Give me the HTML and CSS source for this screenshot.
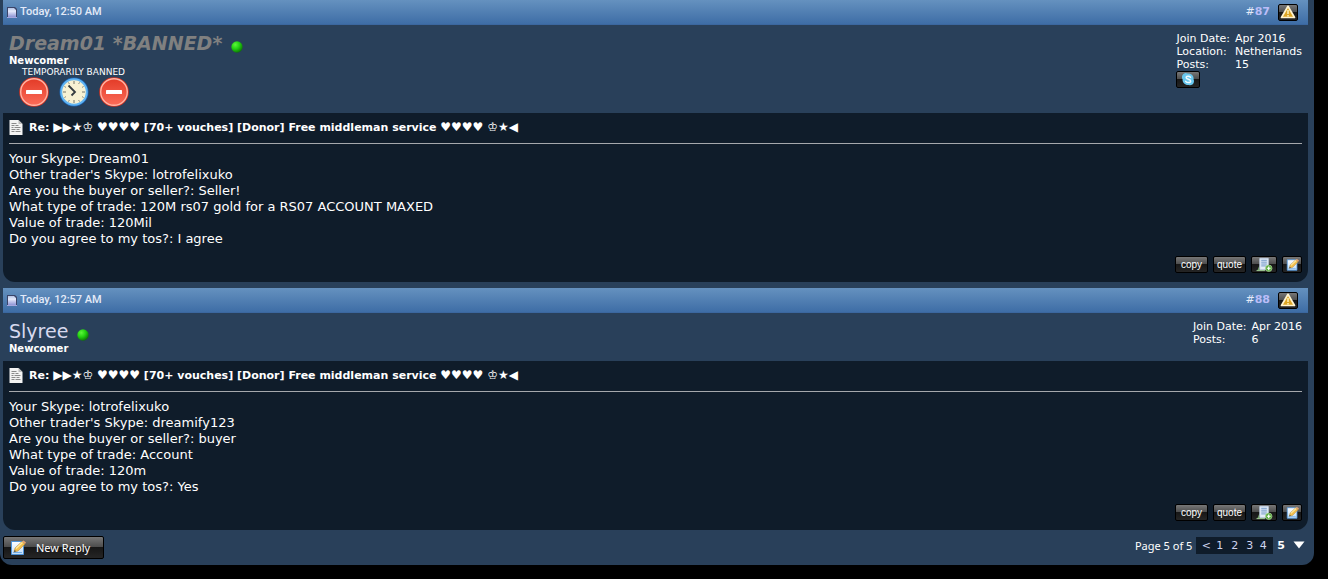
FILE: index.html
```html
<!DOCTYPE html>
<html lang="en">
<head>
<meta charset="utf-8">
<title>Free middleman service - Page 5</title>
<link rel="stylesheet" href="styles.css">
</head>
<body>
<svg class="defs" width="0" height="0" aria-hidden="true">
  <defs>
    <linearGradient id="g-note" x1="0" y1="0" x2="0" y2="1"><stop offset="0" stop-color="#b5c4e6"/><stop offset=".35" stop-color="#e6eafb"/><stop offset="1" stop-color="#8f95d6"/></linearGradient>
    <linearGradient id="g-red" x1="0" y1="0" x2="0" y2="1"><stop offset="0" stop-color="#e33b27"/><stop offset="1" stop-color="#fb6b58"/></linearGradient>
    <linearGradient id="g-sheet" x1="0" y1="0" x2="0" y2="1"><stop offset="0" stop-color="#fff"/><stop offset="1" stop-color="#bfdcf8"/></linearGradient>
    <radialGradient id="g-on" cx=".35" cy=".3" r=".75"><stop offset="0" stop-color="#5cf53a"/><stop offset=".5" stop-color="#22d010"/><stop offset="1" stop-color="#0c6c08"/></radialGradient>
    <symbol id="i-note" viewBox="0 0 10 11"><path d="M0 0h8l2 2v9H0z" fill="#3a4468"/><path d="M1 1h6l2 2v7H1z" fill="url(#g-note)"/><path d="M0 10.500h10" stroke="#a4a7dd"/></symbol>
    <symbol id="i-page" viewBox="0 0 13 15"><path d="M0 0h9l4 4v11H0z" fill="#f3f3f3"/><path d="M9 0v4h4z" fill="#bbb"/><path d="M2 3.500h5M2 5.500h3M6 5.500h3M2 7.500h2M5 7.500h6M2 9.500h4M7 9.500h3M2 11.500h3M6 11.500h5" stroke="#8a8a8a"/></symbol>
    <symbol id="i-online" viewBox="0 0 12 12"><circle cx="6" cy="6" r="5.700" fill="url(#g-on)"/></symbol>
    <symbol id="i-stop" viewBox="0 0 30 30"><circle cx="15" cy="15" r="14.800" fill="#d93220"/><circle cx="15" cy="15" r="13.300" fill="url(#g-red)" stroke="#ffb5a5" stroke-width="1.400"/><rect x="7" y="13" width="16" height="4" rx=".6" fill="#fff"/></symbol>
    <symbol id="i-clock" viewBox="0 0 30 30"><circle cx="15" cy="15" r="14.500" fill="#1c66b8"/><circle cx="15" cy="15" r="12.800" fill="#f7f1d3" stroke="#62b5f3" stroke-width="2"/><g stroke="#77776a"><path d="M15 4v3M15 23v3M4 15h3M23 15h3"/><path d="M9.500 5.500l.8 1.300M20.500 5.500l-.8 1.300M5.500 9.500l1.300.8M24.500 9.500l-1.300.8M5.500 20.500l1.300-.8M24.500 20.500l-1.300-.8M9.500 24.500l.8-1.300M20.500 24.500l-.8-1.300"/></g><path d="M9.500 8.500L16 15l-3.500 3.500" fill="none" stroke="#343b40" stroke-width="1.800"/></symbol>
    <symbol id="i-warn" viewBox="0 0 16 14"><path d="M8 1.300L14.500 12.500h-13z" fill="#dda524" stroke="#fff3cf" stroke-width="1.700" stroke-linejoin="round"/><path d="M8 5v4M8 10v1.500" stroke="#fff3bd" stroke-width="1.500"/></symbol>
    <symbol id="i-skype" viewBox="0 0 16 16"><path d="M4.500 1.200C6 .8 7 1.800 8 1.700c4 0 6.300 2.800 6 6.300 1.500 3.400-1.500 7-5 5.900C5 14.500 1.900 11.500 2.200 7.800.8 5.300 1.900 2 4.500 1.200z" fill="#69c8ef"/><path d="M10.700 5.500C9.300 4 6 4.100 6 5.900c0 2.300 4.800 1.500 4.800 3.900 0 2-4 1.900-5.300.2" fill="none" stroke="#eefaff" stroke-width="1.600" stroke-linecap="round"/></symbol>
    <symbol id="i-multi" viewBox="0 0 17 16"><path d="M1 14l2-5v5z" fill="#71a767"/><path d="M3.500 1.500h9v12h-9z" fill="#e3ecf7" stroke="#c4d3e8"/><path d="M5 3.500h6M5 5.500h6M5 7.500h6M5 9.500h5" stroke="#6d94c5"/><path d="M0 14.500h9" stroke="#a7d69c"/><circle cx="13" cy="12" r="3.500" fill="#57ab3b" stroke="#b7dca7" stroke-width=".7"/><path d="M11 12h4M13 10v4" stroke="#fff" stroke-width="1.300"/></symbol>
    <symbol id="i-edit" viewBox="0 0 16 16"><path d="M1.500 1.500h12v13h-12z" fill="url(#g-sheet)" stroke="#4d94da"/><path d="M3 12.500h9" stroke="#72aee8"/><path d="M4 12l1-4 7-6.500L15 4 8 11z" fill="#f2bf4c" stroke="#a9803a" stroke-width=".5"/><path d="M6 8.500l6.500-6" stroke="#ffe99e" stroke-width="1.400"/><path d="M4 12l.7-2 1.300 1.300z" fill="#3d4147"/><path d="M12 1.500L15 4l1-1.500L13.500.5z" fill="#e9a36c"/></symbol>
  </defs>
</svg>
<main class="thread">
  <article class="post">
    <header class="post-head">
      <span class="posted"><svg class="ico-note"><use href="#i-note"/></svg>Today, 12:50 AM</span>
      <span class="post-tools"><a class="number" href="#p87">#<b>87</b></a><button class="tool tool-warn" aria-label="Report post"><svg class="ico-warn"><use href="#i-warn"/></svg></button></span>
    </header>
    <section class="user">
      <div class="user-main">
        <div class="name-row"><a class="name banned" href="#dream01">Dream01 *BANNED*</a><svg class="ico-online"><use href="#i-online"/></svg></div>
        <div class="rank">Newcomer</div>
        <div class="ban">
          <div class="ban-text">TEMPORARILY BANNED</div>
          <div class="ban-icons"><svg><use href="#i-stop"/></svg><svg><use href="#i-clock"/></svg><svg><use href="#i-stop"/></svg></div>
        </div>
      </div>
      <div class="user-extra">
        <dl class="facts"><dt>Join Date:</dt><dd>Apr 2016</dd><dt>Location:</dt><dd>Netherlands</dd><dt>Posts:</dt><dd>15</dd></dl>
        <button class="tool tool-skype" aria-label="Skype"><svg class="ico-skype"><use href="#i-skype"/></svg></button>
      </div>
    </section>
    <section class="body">
      <h2 class="title"><svg class="ico-page"><use href="#i-page"/></svg><span>Re: <span class="sym">▶▶★♔</span> <span class="sym">♥♥♥♥</span> [70+ vouches] [Donor] Free middleman service <span class="sym">♥♥♥♥</span> <span class="sym">♔★◀</span></span></h2>
      <p class="message">Your Skype: Dream01<br>Other trader's Skype: lotrofelixuko<br>Are you the buyer or seller?: Seller!<br>What type of trade: 120M rs07 gold for a RS07 ACCOUNT MAXED<br>Value of trade: 120Mil<br>Do you agree to my tos?: I agree</p>
      <div class="actions"><button class="tool tool-text">copy</button><button class="tool tool-text">quote</button><button class="tool tool-multi" aria-label="Multi-quote"><svg class="ico-multi"><use href="#i-multi"/></svg></button><button class="tool tool-edit" aria-label="Quick reply"><svg class="ico-edit"><use href="#i-edit"/></svg></button></div>
    </section>
  </article>
  <article class="post">
    <header class="post-head">
      <span class="posted"><svg class="ico-note"><use href="#i-note"/></svg>Today, 12:57 AM</span>
      <span class="post-tools"><a class="number" href="#p88">#<b>88</b></a><button class="tool tool-warn" aria-label="Report post"><svg class="ico-warn"><use href="#i-warn"/></svg></button></span>
    </header>
    <section class="user">
      <div class="user-main">
        <div class="name-row"><a class="name" href="#slyree">Slyree</a><svg class="ico-online"><use href="#i-online"/></svg></div>
        <div class="rank">Newcomer</div>
      </div>
      <div class="user-extra">
        <dl class="facts"><dt>Join Date:</dt><dd>Apr 2016</dd><dt>Posts:</dt><dd>6</dd></dl>
      </div>
    </section>
    <section class="body">
      <h2 class="title"><svg class="ico-page"><use href="#i-page"/></svg><span>Re: <span class="sym">▶▶★♔</span> <span class="sym">♥♥♥♥</span> [70+ vouches] [Donor] Free middleman service <span class="sym">♥♥♥♥</span> <span class="sym">♔★◀</span></span></h2>
      <p class="message">Your Skype: lotrofelixuko<br>Other trader's Skype: dreamify123<br>Are you the buyer or seller?: buyer<br>What type of trade: Account<br>Value of trade: 120m<br>Do you agree to my tos?: Yes</p>
      <div class="actions"><button class="tool tool-text">copy</button><button class="tool tool-text">quote</button><button class="tool tool-multi" aria-label="Multi-quote"><svg class="ico-multi"><use href="#i-multi"/></svg></button><button class="tool tool-edit" aria-label="Quick reply"><svg class="ico-edit"><use href="#i-edit"/></svg></button></div>
    </section>
  </article>
  <footer class="foot">
    <button class="tool reply"><svg class="ico-reply"><use href="#i-edit"/></svg>New Reply</button>
    <nav class="pages" aria-label="Pages">
      <span class="page-of">Page 5 of 5</span>
      <span class="page-links"><a href="#prev">&lt;</a><a href="#1">1</a><a href="#2">2</a><a href="#3">3</a><a href="#4">4</a></span>
      <b class="current">5</b>
      <button class="jump" aria-label="Jump to page"><svg width="12" height="8" viewBox="0 0 12 8"><path d="M.5.500h11L6 7.500z" fill="#fff"/></svg></button>
    </nav>
  </footer>
</main>
</body>
</html>
```
FILE: styles.css
```css
* { box-sizing: border-box; }
body {
  margin: 0;
  background: #000;
  color: #fff;
  font: 11px/13px "DejaVu Sans", sans-serif;
}
svg { display: block; flex: none; }
a { color: inherit; text-decoration: none; }
button { font: inherit; color: inherit; padding: 0; border: 0; background: none; }
.defs { position: absolute; }

.thread {
  margin-right: 14px;
  padding: 0 6px 6px 3px;
  background: #29405a;
  border-radius: 0 0 12px 12px;
}
.post { margin-bottom: 6px; }
.post-head {
  display: flex;
  justify-content: space-between;
  height: 25px;
  padding: 0 10px 2px 4px;
  background: linear-gradient(#6591bf, #3e6da6);
  border-bottom: 1px solid #3b679f;
  color: #e3eaf8;
}
.posted { display: flex; align-items: center; gap: 3px; font: 500 11px/13px Roboto, sans-serif; }
.post-tools { display: flex; align-items: center; gap: 8px; }
.number b { color: #bbbdf8; }
.ico-note { width: 10px; height: 11px; margin-top: 2px; }

.tool {
  display: flex;
  align-items: center;
  justify-content: center;
  border: 1px solid #000;
  border-radius: 2px;
  background: linear-gradient(#777, #4b4b4b 49%, #171717 50%, #252525);
}
.tool-warn { width: 20px; height: 17px; margin-top: 2px; }
.ico-warn { width: 16px; height: 14px; }
.tool-skype { width: 24px; height: 17px; }
.ico-skype { width: 16px; height: 15px; }

.user { display: flex; justify-content: space-between; padding: 6px 6px; }
.name-row { display: flex; align-items: center; gap: 9px; height: 24px; }
.name { color: #d7d9ee; font-size: 19px; line-height: 24px; }
.banned { color: #808080; font-weight: bold; font-style: italic; }
.ico-online { width: 12px; height: 12px; margin-top: 7px; }
.rank { font-size: 10px; font-weight: bold; line-height: 12px; }
.ban { width: 130px; padding-left: 10px; }
.ban-text { padding-left: 3px; font: 9px/10px "DejaVu Sans", sans-serif; white-space: nowrap; }
.ban-icons { display: flex; gap: 10px; }
.ban-icons svg { width: 30px; height: 30px; }
.facts { display: grid; grid-template-columns: auto auto; column-gap: 5px; margin: 0; padding-top: 1px; }
.facts dd { margin: 0; }

.body { padding: 0 6px 9px; background: #0f1c2a; border-radius: 0 0 12px 12px; }
.title {
  display: flex;
  align-items: center;
  gap: 6px;
  height: 31px;
  margin: 0 0 7px;
  padding-bottom: 1px;
  border-bottom: 1px solid #a5a8ac;
  font: bold 11px/14px "DejaVu Sans", sans-serif;
}
.ico-page { width: 14px; height: 15px; }
.sym { font-size: 12px; }
.message { margin: 0 0 9px; font-size: 13px; line-height: 16px; }
.actions { display: flex; justify-content: flex-end; gap: 5px; }
.actions .tool { height: 17px; }
.tool-text { width: 33px; font: 10px/12px "Liberation Sans", sans-serif; }
.actions .tool-multi { width: 26px; }
.actions .tool-edit { width: 20px; }
.ico-multi { width: 17px; height: 15px; }
.ico-edit { width: 13px; height: 14px; }

.foot { display: flex; justify-content: space-between; padding-right: 3px; }
.reply { justify-content: flex-start; width: 101px; height: 23px; padding-left: 6px; gap: 10px; font: 11px/13px "Noto Sans", sans-serif; }
.ico-reply { width: 16px; height: 16px; }
.pages { display: flex; align-items: center; height: 18px; }
.page-of { margin-right: 4px; font: 11px/13px "Noto Sans", sans-serif; }
.page-links { display: flex; padding: 0 4px; background: #0f1c2a; color: #d0d4ee; line-height: 17px; }
.page-links a { width: 15px; text-align: center; }
.page-links a:first-child, .page-links a:last-child { width: 12px; }
.pages .current { margin: 0 8px 0 4px; }
```
